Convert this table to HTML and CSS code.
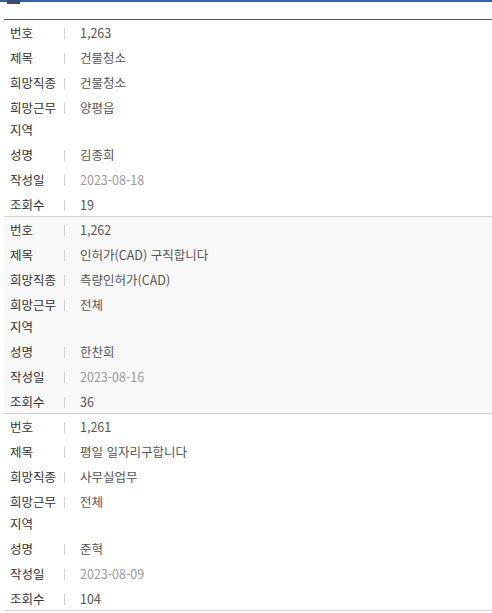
FILE: index.html
```html
<!DOCTYPE html>
<html lang="ko">
<head>
<meta charset="utf-8">
<link rel="stylesheet" href="styles.css">
</head>
<body>
<div class="topbar"><span class="tab"></span></div>
<div class="list">
  <dl class="record">
    <div class="row"><dt>번호</dt><i class="bar"></i><dd>1,263</dd></div>
    <div class="row"><dt>제목</dt><i class="bar"></i><dd>건물청소</dd></div>
    <div class="row"><dt>희망직종</dt><i class="bar"></i><dd>건물청소</dd></div>
    <div class="row"><dt>희망근무지역</dt><i class="bar"></i><dd>양평읍</dd></div>
    <div class="row"><dt>성명</dt><i class="bar"></i><dd>김종희</dd></div>
    <div class="row"><dt>작성일</dt><i class="bar"></i><dd class="date">2023-08-18</dd></div>
    <div class="row"><dt>조회수</dt><i class="bar"></i><dd>19</dd></div>
  </dl>
  <dl class="record alt">
    <div class="row"><dt>번호</dt><i class="bar"></i><dd>1,262</dd></div>
    <div class="row"><dt>제목</dt><i class="bar"></i><dd>인허가(CAD) 구직합니다</dd></div>
    <div class="row"><dt>희망직종</dt><i class="bar"></i><dd>측량인허가(CAD)</dd></div>
    <div class="row"><dt>희망근무지역</dt><i class="bar"></i><dd>전체</dd></div>
    <div class="row"><dt>성명</dt><i class="bar"></i><dd>한찬희</dd></div>
    <div class="row"><dt>작성일</dt><i class="bar"></i><dd class="date">2023-08-16</dd></div>
    <div class="row"><dt>조회수</dt><i class="bar"></i><dd>36</dd></div>
  </dl>
  <dl class="record">
    <div class="row"><dt>번호</dt><i class="bar"></i><dd>1,261</dd></div>
    <div class="row"><dt>제목</dt><i class="bar"></i><dd>평일 일자리구합니다</dd></div>
    <div class="row"><dt>희망직종</dt><i class="bar"></i><dd>사무실업무</dd></div>
    <div class="row"><dt>희망근무지역</dt><i class="bar"></i><dd>전체</dd></div>
    <div class="row"><dt>성명</dt><i class="bar"></i><dd>준혁</dd></div>
    <div class="row"><dt>작성일</dt><i class="bar"></i><dd class="date">2023-08-09</dd></div>
    <div class="row"><dt>조회수</dt><i class="bar"></i><dd>104</dd></div>
  </dl>
</div>
</body>
</html>
```
FILE: styles.css
```css
html, body {
  margin: 0;
  padding: 0;
  background: #fff;
}
body {
  font-family: "Noto Sans CJK KR", "Noto Sans", sans-serif;
  font-size: 12.5px;
  color: #333;
}
.topbar {
  height: 2px;
  background: #3461a8;
  position: relative;
}
.tab {
  position: absolute;
  left: 7px;
  top: 0;
  width: 13px;
  height: 4px;
  background: #3a4a70;
}
.list {
  margin: 17px 0 0 4px;
  border-top: 1px solid #4d5264;
}
.record {
  margin: 0;
  border-bottom: 1px solid #d2d2d2;
}
.record.alt {
  background: #f8f8f8;
}
.row {
  display: grid;
  grid-template-columns: 54px 1px 1fr;
  align-items: start;
  padding: 1.5px 0 1.5px 6px;
  line-height: 22px;
}
.row:last-child {
  padding-bottom: 0.5px;
}
dt {
  margin: 0;
  color: #333;
}
.bar {
  display: block;
  width: 1px;
  height: 11px;
  margin-top: 6px;
  background: #cfcfcf;
}
dd {
  margin: 0;
  padding-left: 15px;
  color: #555;
}
dd.date {
  color: #999;
}
```
